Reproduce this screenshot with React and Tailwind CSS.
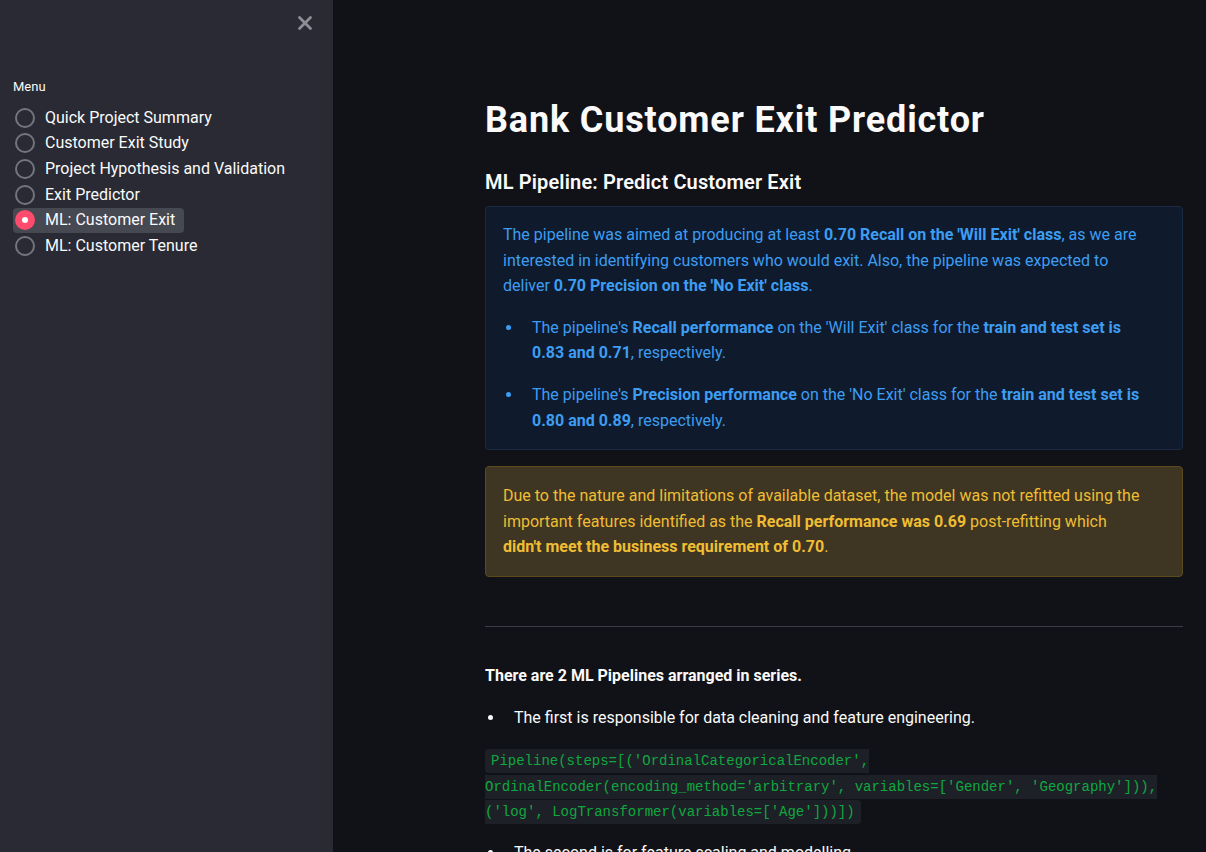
import React from 'react';

const pages = [
  'Quick Project Summary',
  'Customer Exit Study',
  'Project Hypothesis and Validation',
  'Exit Predictor',
  'ML: Customer Exit',
  'ML: Customer Tenure',
];

function Sidebar() {
  return (
    <aside className="w-[333px] shrink-0 bg-[#292a34] min-h-screen relative">
      <button className="absolute left-[296px] top-[14px] w-[18px] h-[18px] flex items-center justify-center text-[#8d8f97]">
        <svg width="16" height="16" viewBox="0 0 16 16">
          <path d="M2.5 2.5 L13.5 13.5 M13.5 2.5 L2.5 13.5" stroke="currentColor" strokeWidth="2.8" strokeLinecap="round" />
        </svg>
      </button>
      <div className="pt-[79px] px-[13px]">
        <div className="text-[13px] leading-[16px] text-[#fafafa] mb-[10px]">Menu</div>
        <div className="flex flex-col">
          {pages.map((p) => {
            const active = p === 'ML: Customer Exit';
            return (
              <div key={p} className="h-[25.6px] flex items-center">
                <div className={`flex items-center h-[25px] pr-[9px] rounded ${active ? 'bg-[#464852]' : ''}`}>
                  <span
                    className={`ml-[2px] w-[20px] h-[20px] rounded-full flex items-center justify-center ${
                      active ? 'bg-[#ff4b6e]' : 'border-2 border-[#73757d]'
                    }`}
                  >
                    {active && <span className="w-[6px] h-[6px] rounded-full bg-white" />}
                  </span>
                  <span className="ml-[10px] text-[16px] text-[#fafafa]">{p}</span>
                </div>
              </div>
            );
          })}
        </div>
      </div>
    </aside>
  );
}

function Bullet({ children, className = '' }) {
  return (
    <li className={`flex items-start ${className}`}>
      <span className="w-[29px] h-[25.6px] shrink-0 flex items-center">
        <span className="ml-[3px] w-[5px] h-[5px] rounded-full bg-current" />
      </span>
      <span>{children}</span>
    </li>
  );
}

export default function App() {
  return (
    <div
      className="flex min-h-screen bg-[#111217] text-[#fafafa] overflow-hidden"
      style={{ fontFamily: 'Roboto, "Open Sans", sans-serif' }}
    >
      <Sidebar />
      <main className="pl-[152px] pt-[96px]">
        <div className="w-[698px]">
          <h1 className="text-[36px] leading-[48px] font-bold tracking-[0.85px]">Bank Customer Exit Predictor</h1>
          <h3 className="mt-[23px] text-[20px] leading-[30px] font-semibold tracking-[0.15px]">
            ML Pipeline: Predict Customer Exit
          </h3>

          <div className="mt-[9px] rounded border border-[#1a2b44] bg-[#0f1b2c] text-[#3d9df3] px-[17px] pt-[15px] pb-[12px] text-[16px] leading-[25.6px]">
            <p>
              The pipeline was aimed at producing at least <b>0.70 Recall on the 'Will Exit' class</b>, as we are
              <br />
              interested in identifying customers who would exit. Also, the pipeline was expected to
              <br />
              deliver <b>0.70 Precision on the 'No Exit' class</b>.
            </p>
            <ul className="mt-[16px]">
              <Bullet className="mb-[16px]">
                The pipeline's <b>Recall performance</b> on the 'Will Exit' class for the <b>train and test set is</b>
                <br />
                <b>0.83 and 0.71</b>, respectively.
              </Bullet>
              <Bullet className="mb-[4px]">
                The pipeline's <b>Precision performance</b> on the 'No Exit' class for the <b>train and test set is</b>
                <br />
                <b>0.80 and 0.89</b>, respectively.
              </Bullet>
            </ul>
          </div>

          <div className="mt-[16px] rounded border border-[#5a4a1c] bg-[#3e3623] text-[#f0bd33] px-[17px] pt-[16px] pb-[16px] text-[16px] leading-[25.6px]">
            Due to the nature and limitations of available dataset, the model was not refitted using the
            <br />
            important features identified as the <b>Recall performance was 0.69</b> post-refitting which
            <br />
            <b>didn't meet the business requirement of 0.70</b>.
          </div>

          <hr className="mt-[49px] border-0 border-t border-[#3b3d46]" />

          <p className="mt-[36px] font-bold text-[16px] leading-[25.6px]">There are 2 ML Pipelines arranged in series.</p>
          <ul className="mt-[16px] text-[16px] leading-[25.6px]">
            <Bullet>The first is responsible for data cleaning and feature engineering.</Bullet>
          </ul>
          <p
            className="mt-[19px] text-[14px] leading-[25.6px] text-[#0fa83f]"
            style={{ fontFamily: '"Liberation Mono", "DejaVu Sans Mono", monospace' }}
          >
            <code className="bg-[#1e2028] rounded px-[6px] py-[4px]">
              Pipeline(steps=[('OrdinalCategoricalEncoder',
              <br />
              OrdinalEncoder(encoding_method='arbitrary', variables=['Gender', 'Geography'])),
              <br />
              ('log', LogTransformer(variables=['Age']))])
            </code>
          </p>
          <ul className="mt-[14px] text-[16px] leading-[25.6px]">
            <Bullet>The second is for feature scaling and modelling.</Bullet>
          </ul>
        </div>
      </main>
    </div>
  );
}
